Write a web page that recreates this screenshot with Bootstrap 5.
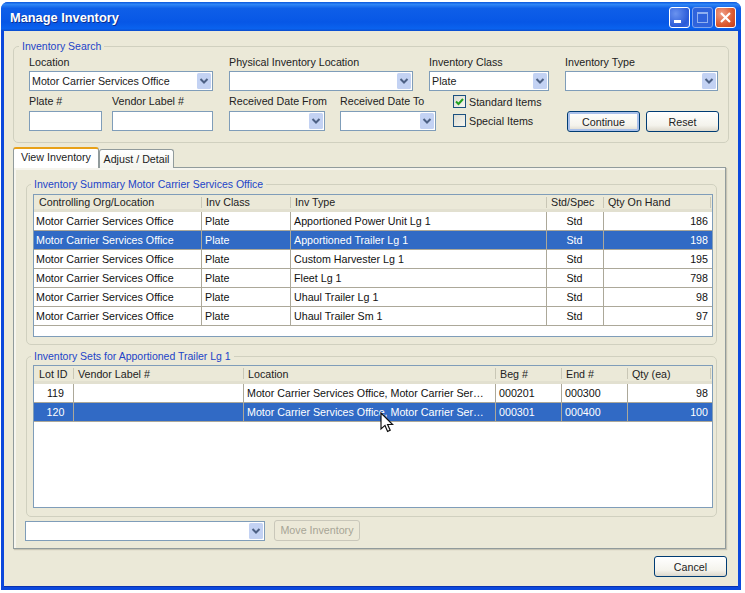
<!DOCTYPE html>
<html lang="en">
<head>
<meta charset="utf-8">
<title>Manage Inventory</title>
<link href="https://cdn.jsdelivr.net/npm/bootstrap@5.3.0/dist/css/bootstrap.min.css" rel="stylesheet">
<style>
html,body{margin:0;padding:0;background:#fff;width:745px;height:593px;overflow:hidden}
body{font-family:"Liberation Sans",Arial,sans-serif;font-size:10.700px;line-height:14px;color:#1a1a1a}
.win{position:relative;margin:2px 0 0 1px;width:740px;height:588px;background:#0b48dc;border-radius:7px 7px 0 0;padding:0 3px 3px;overflow:hidden}
.titlebar{height:29px;margin:0 -3px;padding:2px 5px 0 9px;background:linear-gradient(180deg,#0a56dc 0,#2f86f6 8%,#0f5fe8 22%,#0757e6 70%,#0a62ee 92%,#0a4ccc 100%)}
.titlebar h1{font-size:12.800px;font-weight:700;line-height:16px;margin:0;color:#fff;font-family:"Liberation Sans",sans-serif;text-shadow:1px 1px 0 #0b2e8c}
.ctl{width:21px;height:21px;border:1px solid #fff;border-radius:3px;margin-left:2px;background:radial-gradient(circle at 30% 30%,#6a93ef,#2a5ad8 70%,#3f6fe4)}
.ctl.dim{background:#2f63dc;border-color:#7da4ee}
.ctl.cl{background:radial-gradient(circle at 30% 30%,#f0a088,#dc5a30 60%,#c23c18)}
.ctl svg{display:block}
.body{background:#ebe9d8;height:556px;padding:8px 9px 0 9px;border-bottom:1px solid #0831b0}
fieldset.grp{border:1px solid #d0d0bf;border-radius:5px;margin:0;min-width:0}
fieldset.grp legend{float:none;width:auto;font-size:10.500px;line-height:14px;padding:0 3px;color:#2244c8}
.search{height:104px;width:716px;padding:0 9px 0 15px}
.search legend{margin:0 0 2px -10px}
.flabel{display:block;height:14px;line-height:14px;margin:0;color:#222;white-space:nowrap}
.combo{height:20px;background:#fff;border:1px solid #7f9db9;padding:0 1px 0 2px;line-height:18px;white-space:nowrap;overflow:hidden}
.combo svg{flex:none;margin-top:1px}
.txt{height:20px;background:#fff;border:1px solid #7f9db9}
.w184{width:184px}.w120{width:120px}.w153{width:153px}.w73{width:73px}.w101{width:101px}.w96{width:96px}
.g16{margin-right:16px}.g10{margin-right:10px}.g15{margin-right:15px}.g17{margin-right:17px}
.f1{margin-bottom:2px}
.f2{margin-bottom:3px}
.row2{margin-top:3px}
.col-chk{padding-top:1px}
.chk{height:13px;line-height:15px;color:#222;margin-bottom:6px;white-space:nowrap}
.box{width:13px;height:13px;border:1px solid #1c5180;background:linear-gradient(135deg,#dcdcd2,#f6f6f0);margin-right:3px;flex:none}
.box svg{display:block}
.xp{height:21px;border:1px solid #003c74;border-radius:3px;background:linear-gradient(180deg,#fff,#f4f3ec 70%,#dcd8cc);font-size:10.700px;line-height:18px;padding:0;color:#222;text-align:center}
.xp.def{box-shadow:inset 0 0 0 2px #a9c0ea}
.btnrow{padding-top:17px;gap:6px}
.tabs{margin-top:4px;height:21px;align-items:flex-end;position:relative;z-index:2;margin-bottom:-1px}
.tab{border:1px solid #919b9c;border-bottom:0;border-radius:3px 3px 0 0;background:linear-gradient(180deg,#fff,#f3f3ec);text-align:center;white-space:nowrap;color:#222}
.tab.on{width:86px;height:21px;background:#fff;border-top:2px solid #e8a118;line-height:16px}
.tab.off{width:75px;height:19px;line-height:18px}
.panel{width:713px;height:382px;border:1px solid #919b9c;box-shadow:inset 2px 2px 0 #f6f5ee,1px 1px 1px #c6c4b4;padding:9px 8px 0 12px;background:#ebe9d8}
.g-a,.g-b{height:168px;width:691px;padding:0 3px 0 6px}
.g-a legend{margin:0 0 3px -2px}
.g-b legend{margin:0 0 2px -2px}
.g-b{margin-top:4px!important}
.grid{background:#fff;border:1px solid #7f9db9;height:143px;width:680px;overflow:hidden}
table.t{table-layout:fixed;margin:0;width:678px;border-collapse:separate;border-spacing:0;--bs-table-bg:transparent;color:#111;font-size:10.700px}
table.t th{font-weight:400;height:17px;padding:0 0 0 5px;line-height:13px;background:#ebe9d8;border-bottom:3px solid #e2e0d0;color:#222;position:relative;white-space:nowrap;overflow:hidden}
table.t th+th::before{content:"";position:absolute;left:0;top:2px;height:11px;width:1px;background:#c9c7b6}
table.t th:last-child::after{content:"";position:absolute;right:1px;top:2px;height:11px;width:1px;background:#c9c7b6}
table.t td{height:19px;padding:1px 4px 0 3px;line-height:17px;border:0;border-bottom:1px solid #aca899;white-space:nowrap;overflow:hidden;background:#fff;color:#111}
table.t td:first-child{padding-left:2px}
table.t td.lot{padding-left:4px;padding-right:0}
table.t td+td{border-left:1px solid #aca899}
table.t tr.sel td{background:#316ac5;color:#fff}
table.sets th{height:18px;padding-top:1px}
.bot{margin:3px 0 0 -1px;height:21px}
.bot .combo{width:240px;margin-right:9px;margin-top:1px}
.off-btn{width:86px;height:21px;border:1px solid #c9c7ba;border-radius:3px;background:#ece9d8;color:#a7a596;line-height:19px;text-align:center}
.foot{width:714px;margin-top:7px;justify-content:flex-end}
.cursor{position:absolute;left:379px;top:410px}
</style>
</head>
<body>
<div class="win">
  <div class="titlebar d-flex align-items-center justify-content-between">
    <h1>Manage Inventory</h1>
    <div class="d-flex">
      <div class="ctl"><svg width="19" height="19"><rect x="4" y="12" width="7" height="3" fill="#fff"/></svg></div>
      <div class="ctl dim"><svg width="19" height="19"><rect x="4.500" y="4.500" width="10" height="10" fill="none" stroke="#8fb0f0"/><rect x="4" y="4" width="11" height="2" fill="#8fb0f0"/></svg></div>
      <div class="ctl cl"><svg width="19" height="19"><path d="M5 5l9 9M14 5l-9 9" stroke="#fff" stroke-width="2.200"/></svg></div>
    </div>
  </div>
  <div class="body">
    <fieldset class="grp search">
      <legend>Inventory Search</legend>
      <div class="d-flex">
        <div class="w184 g16"><span class="flabel f1">Location</span>
          <div class="combo d-flex justify-content-between"><span>Motor Carrier Services Office</span><svg width="14" height="16"><use href="#arr"/></svg></div></div>
        <div class="w184 g16"><span class="flabel f1">Physical Inventory Location</span>
          <div class="combo d-flex justify-content-end"><svg width="14" height="16"><use href="#arr"/></svg></div></div>
        <div class="w120 g16"><span class="flabel f1">Inventory Class</span>
          <div class="combo d-flex justify-content-between"><span>Plate</span><svg width="14" height="16"><use href="#arr"/></svg></div></div>
        <div class="w153"><span class="flabel f1">Inventory Type</span>
          <div class="combo d-flex justify-content-end"><svg width="14" height="16"><use href="#arr"/></svg></div></div>
      </div>
      <div class="d-flex row2">
        <div class="w73 g10"><span class="flabel f2">Plate #</span><div class="txt"></div></div>
        <div class="w101 g16"><span class="flabel f2">Vendor Label #</span><div class="txt"></div></div>
        <div class="w96 g15"><span class="flabel f2">Received Date From</span>
          <div class="combo d-flex justify-content-end"><svg width="14" height="16"><use href="#arr"/></svg></div></div>
        <div class="w96 g17"><span class="flabel f2">Received Date To</span>
          <div class="combo d-flex justify-content-end"><svg width="14" height="16"><use href="#arr"/></svg></div></div>
        <div class="col-chk">
          <div class="chk d-flex"><span class="box"><svg width="11" height="11"><path d="M2 5.500l2.500 2.500L9 3" fill="none" stroke="#21a121" stroke-width="2"/></svg></span>Standard Items</div>
          <div class="chk d-flex"><span class="box"></span>Special Items</div>
        </div>
        <div class="d-flex ms-auto btnrow">
          <button type="button" class="btn xp def w73">Continue</button>
          <button type="button" class="btn xp w73">Reset</button>
        </div>
      </div>
    </fieldset>
    <div class="d-flex tabs">
      <div class="tab on">View Inventory</div>
      <div class="tab off">Adjust / Detail</div>
    </div>
    <div class="panel">
      <fieldset class="grp g-a">
        <legend>Inventory Summary Motor Carrier Services Office</legend>
        <div class="grid">
          <table class="table t">
            <colgroup><col style="width:167px"><col style="width:89px"><col style="width:256px"><col style="width:57px"><col style="width:109px"></colgroup>
            <thead><tr><th>Controlling Org/Location</th><th>Inv Class</th><th>Inv Type</th><th>Std/Spec</th><th>Qty On Hand</th></tr></thead>
            <tbody>
              <tr><td>Motor Carrier Services Office</td><td>Plate</td><td>Apportioned Power Unit Lg 1</td><td class="text-center">Std</td><td class="text-end">186</td></tr>
              <tr class="sel"><td>Motor Carrier Services Office</td><td>Plate</td><td>Apportioned Trailer Lg 1</td><td class="text-center">Std</td><td class="text-end">198</td></tr>
              <tr><td>Motor Carrier Services Office</td><td>Plate</td><td>Custom Harvester Lg 1</td><td class="text-center">Std</td><td class="text-end">195</td></tr>
              <tr><td>Motor Carrier Services Office</td><td>Plate</td><td>Fleet Lg 1</td><td class="text-center">Std</td><td class="text-end">798</td></tr>
              <tr><td>Motor Carrier Services Office</td><td>Plate</td><td>Uhaul Trailer Lg 1</td><td class="text-center">Std</td><td class="text-end">98</td></tr>
              <tr><td>Motor Carrier Services Office</td><td>Plate</td><td>Uhaul Trailer Sm 1</td><td class="text-center">Std</td><td class="text-end">97</td></tr>
            </tbody>
          </table>
        </div>
      </fieldset>
      <fieldset class="grp g-b">
        <legend>Inventory Sets for Apportioned Trailer Lg 1</legend>
        <div class="grid">
          <table class="table t sets">
            <colgroup><col style="width:39px"><col style="width:170px"><col style="width:252px"><col style="width:66px"><col style="width:66px"><col style="width:85px"></colgroup>
            <thead><tr><th>Lot ID</th><th>Vendor Label #</th><th>Location</th><th>Beg #</th><th>End #</th><th>Qty (ea)</th></tr></thead>
            <tbody>
              <tr><td class="text-center lot">119</td><td></td><td>Motor Carrier Services Office, Motor Carrier Ser…</td><td>000201</td><td>000300</td><td class="text-end">98</td></tr>
              <tr class="sel"><td class="text-center lot">120</td><td></td><td>Motor Carrier Services Office, Motor Carrier Ser…</td><td>000301</td><td>000400</td><td class="text-end">100</td></tr>
            </tbody>
          </table>
        </div>
      </fieldset>
      <div class="d-flex bot">
        <div class="combo d-flex justify-content-end"><svg width="14" height="16"><use href="#arr"/></svg></div>
        <div class="off-btn">Move Inventory</div>
      </div>
    </div>
    <div class="d-flex foot"><button type="button" class="btn xp w73">Cancel</button></div>
  </div>
  <svg class="cursor" width="14" height="22" viewBox="0 0 14 22"><path d="M1 1v16l4-3.600 2.600 6 2.600-1.100-2.600-5.800h5z" fill="#fff" stroke="#111" stroke-width="1.200"/></svg>
</div>
<svg width="0" height="0" class="position-absolute"><defs><symbol id="arr" viewBox="0 0 14 16"><rect width="14" height="16" rx="1.500" fill="#c3d2f3"/><path d="M3.500 6l3.500 3.500L10.500 6" fill="none" stroke="#4d6185" stroke-width="2"/></symbol></defs></svg>
</body>
</html>
